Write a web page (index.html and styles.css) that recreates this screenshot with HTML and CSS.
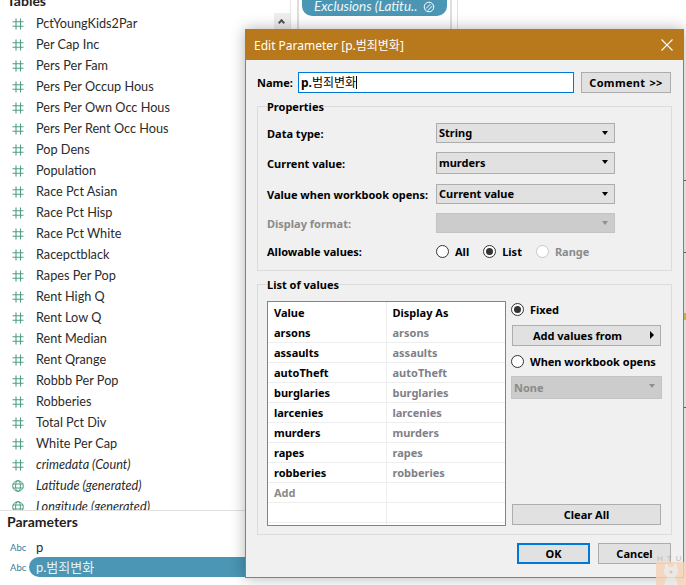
FILE: index.html
```html
<!DOCTYPE html>
<html lang="en">
<head>
  <meta charset="UTF-8" />
  <title>Edit Parameter</title>
  <link rel="stylesheet" href="styles.css">
</head>
<body>
  <svg class="defs" width="0" height="0">
    <symbol id="hash" viewBox="0 0 12 12">
      <path d="M4 .5v11M8.500 .5v11M.5 3.800h11M.5 8.200h11" fill="none" stroke="currentColor" stroke-width="1.100"/>
    </symbol>
    <symbol id="globe" viewBox="0 0 12 12">
      <circle cx="6" cy="6" r="5.300" fill="none" stroke="currentColor"/>
      <ellipse cx="6" cy="6" rx="2.400" ry="5.300" fill="none" stroke="currentColor"/>
      <path d="M.7 4h10.600M.7 8h10.600" fill="none" stroke="currentColor"/>
    </symbol>
  </svg>

  <div class="app">
    <!-- Data pane -->
    <aside class="sidebar">
      <div class="fields">
        <h3 class="pane-title tables-title">Tables</h3>
        <div class="field"><svg class="ico"><use href="#hash"/></svg>PctYoungKids2Par</div>
        <div class="field"><svg class="ico"><use href="#hash"/></svg>Per Cap Inc</div>
        <div class="field"><svg class="ico"><use href="#hash"/></svg>Pers Per Fam</div>
        <div class="field"><svg class="ico"><use href="#hash"/></svg>Pers Per Occup Hous</div>
        <div class="field"><svg class="ico"><use href="#hash"/></svg>Pers Per Own Occ Hous</div>
        <div class="field"><svg class="ico"><use href="#hash"/></svg>Pers Per Rent Occ Hous</div>
        <div class="field"><svg class="ico"><use href="#hash"/></svg>Pop Dens</div>
        <div class="field"><svg class="ico"><use href="#hash"/></svg>Population</div>
        <div class="field"><svg class="ico"><use href="#hash"/></svg>Race Pct Asian</div>
        <div class="field"><svg class="ico"><use href="#hash"/></svg>Race Pct Hisp</div>
        <div class="field"><svg class="ico"><use href="#hash"/></svg>Race Pct White</div>
        <div class="field"><svg class="ico"><use href="#hash"/></svg>Racepctblack</div>
        <div class="field"><svg class="ico"><use href="#hash"/></svg>Rapes Per Pop</div>
        <div class="field"><svg class="ico"><use href="#hash"/></svg>Rent High Q</div>
        <div class="field"><svg class="ico"><use href="#hash"/></svg>Rent Low Q</div>
        <div class="field"><svg class="ico"><use href="#hash"/></svg>Rent Median</div>
        <div class="field"><svg class="ico"><use href="#hash"/></svg>Rent Qrange</div>
        <div class="field"><svg class="ico"><use href="#hash"/></svg>Robbb Per Pop</div>
        <div class="field"><svg class="ico"><use href="#hash"/></svg>Robberies</div>
        <div class="field"><svg class="ico"><use href="#hash"/></svg>Total Pct Div</div>
        <div class="field"><svg class="ico"><use href="#hash"/></svg>White Per Cap</div>
        <div class="field calc"><svg class="ico"><use href="#hash"/></svg>crimedata (Count)</div>
        <div class="field calc"><svg class="ico"><use href="#globe"/></svg>Latitude (generated)</div>
        <div class="field calc"><svg class="ico"><use href="#globe"/></svg>Longitude (generated)</div>
      </div>
      <div class="params">
        <h3 class="pane-title">Parameters</h3>
        <div class="param"><span class="abc">Abc</span><span class="param-name">p</span></div>
        <div class="param"><span class="abc">Abc</span><span class="param-name selected">p.범죄변화</span></div>
      </div>
    </aside>

    <div class="scroll-col"><div class="scroll-up"><span class="chevron"></span></div></div>

    <!-- Shelf -->
    <div class="shelf">
      <div class="shelf-card">
        <div class="pill">
          Exclusions (Latitu..
          <svg class="link-ico" viewBox="0 0 12 12"><circle cx="6" cy="6" r="4.800" fill="none" stroke="#fff"/><path d="M3 7.500 7.500 3M4.800 9.500 9.500 4.800" fill="none" stroke="#fff"/></svg>
        </div>
      </div>
    </div>
    <div class="canvas"></div>
  </div>

  <i class="tick tick-1"></i>
  <i class="tick tick-2"></i>
  <i class="tick tick-3"></i>
  <i class="tick tick-4"></i>

  <!-- Dialog -->
  <div class="dialog">
    <div class="titlebar">
      <span>Edit Parameter [p.범죄변화]</span>
      <svg class="close" viewBox="0 0 12 12"><path d="M.5.500l11 11M11.500.500l-11 11" stroke="#fff" fill="none" stroke-width="1.100"/></svg>
    </div>
    <div class="dialog-body">
      <div class="name-row">
        <label class="name-label">Name:</label>
        <div class="name-input">p.<span class="kr">범죄변화</span><span class="caret"></span></div>
        <button class="btn comment-btn">Comment &gt;&gt;</button>
      </div>

      <fieldset class="group props">
        <legend>Properties</legend>
        <div class="prop-row">
          <span class="prop-label">Data type:</span>
          <div class="select">String<span class="arrow"></span></div>
        </div>
        <div class="prop-row tall-row">
          <span class="prop-label">Current value:</span>
          <div class="select tall">murders<span class="arrow"></span></div>
        </div>
        <div class="prop-row">
          <span class="prop-label">Value when workbook opens:</span>
          <div class="select">Current value<span class="arrow"></span></div>
        </div>
        <div class="prop-row">
          <span class="prop-label muted">Display format:</span>
          <div class="select disabled"><span class="arrow"></span></div>
        </div>
        <div class="prop-row allow-row">
          <span class="prop-label">Allowable values:</span>
          <div class="radios">
            <span class="radio-item"><span class="radio"></span>All</span>
            <span class="radio-item"><span class="radio on"></span>List</span>
            <span class="radio-item muted"><span class="radio off"></span>Range</span>
          </div>
        </div>
      </fieldset>

      <fieldset class="group list-group">
        <legend>List of values</legend>
        <div class="list-inner">
          <div class="values-box">
            <table class="values">
              <tr class="head"><th>Value</th><th>Display As</th></tr>
              <tr><td>arsons</td><td>arsons</td></tr>
              <tr><td>assaults</td><td>assaults</td></tr>
              <tr><td>autoTheft</td><td>autoTheft</td></tr>
              <tr><td>burglaries</td><td>burglaries</td></tr>
              <tr><td>larcenies</td><td>larcenies</td></tr>
              <tr><td>murders</td><td>murders</td></tr>
              <tr><td>rapes</td><td>rapes</td></tr>
              <tr><td>robberies</td><td>robberies</td></tr>
              <tr><td>Add</td><td></td></tr>
              <tr><td></td><td></td></tr>
              <tr><td></td><td></td></tr>
            </table>
          </div>
          <div class="list-side">
            <span class="radio-item"><span class="radio on"></span>Fixed</span>
            <button class="btn side-btn add-btn">Add values from<span class="arrow-right"></span></button>
            <span class="radio-item when"><span class="radio"></span>When workbook opens</span>
            <div class="select disabled none-select">None<span class="arrow"></span></div>
            <button class="btn side-btn clear-btn">Clear All</button>
          </div>
        </div>
      </fieldset>

      <div class="actions">
        <button class="btn ok-btn">OK</button>
        <button class="btn">Cancel</button>
      </div>
    </div>
  </div>

  <!-- corner watermark -->
  <div class="mark">
    <span class="mark-text">H T U</span>
    <svg class="mark-face" viewBox="0 0 30 23">
      <rect width="30" height="23" fill="#f5d3b8"/>
      <path d="M9 6c-1-4 2-6 3-3l1 2h4l1-2c1-3 4-1 3 3 2 3 1 7-2 8l3 9H8l3-9c-3-1-4-5-2-8z" fill="#ece8e2"/>
      <circle cx="15" cy="10" r="1.500" fill="#c9c2ba"/>
    </svg>
  </div>
</body>
</html>
```
FILE: styles.css
```css
html, body {
  margin: 0;
  padding: 0;
}
body {
  position: relative;
  width: 686px;
  height: 585px;
  overflow: hidden;
  background-color: white;
  font-family: Lato, sans-serif;
  color: #2b2b2b;
}
.defs {
  position: absolute;
}
.app {
  display: flex;
  height: 585px;
}

/* data pane */
.sidebar {
  width: 274px;
  flex: none;
  display: flex;
  flex-direction: column;
}
.fields {
  height: 510px;
  overflow: hidden;
  border-bottom: 1px solid #e2e2e2;
  box-sizing: content-box;
}
.pane-title {
  margin: 0;
  font-size: 14px;
  font-weight: 700;
  line-height: 20px;
  color: #1f1f1f;
  padding-left: 7px;
}
.tables-title {
  margin-top: -9px;
  margin-bottom: 2px;
}
.field {
  height: 21px;
  line-height: 21px;
  font-size: 12.700px;
  padding-left: 36px;
  position: relative;
  white-space: nowrap;
}
.calc {
  font-style: italic;
}
.ico {
  position: absolute;
  left: 12px;
  top: 5px;
  width: 12px;
  height: 12px;
  color: #4f9f80;
}
.params {
  padding-top: 1px;
}
.param {
  display: flex;
  align-items: center;
  height: 20px;
}
.params .pane-title {
  margin-bottom: 5px;
}
.abc {
  width: 29px;
  padding-left: 10px;
  box-sizing: border-box;
  flex: none;
  font-size: 9.500px;
  color: #3d7a96;
}
.param-name {
  font-size: 13px;
  padding-left: 7px;
  font-family: Lato, "Noto Sans CJK KR", sans-serif;
}
.param-name.selected {
  flex: 1;
  height: 20px;
  line-height: 20px;
  background-color: #4a96b4;
  color: #e8f2f6;
  border-radius: 10px 0 0 10px;
}

/* shelf column */
.scroll-col {
  width: 16px;
  flex: none;
  padding-top: 13px;
}
.scroll-up {
  height: 17px;
  background-color: #eeeeee;
  position: relative;
}
.chevron {
  position: absolute;
  left: 5px;
  top: 7px;
  width: 5px;
  height: 5px;
  border-left: 2px solid #555;
  border-top: 2px solid #555;
  transform: rotate(45deg);
  box-sizing: border-box;
}
.shelf {
  width: 168px;
  height: 100px;
  flex: none;
  box-sizing: border-box;
  padding-left: 6px;
  border-left: 1px solid #e6e6e6;
  border-right: 1px solid #e0e0e0;
}
.shelf-card {
  width: 155px;
  height: 100px;
  box-sizing: border-box;
  border-left: 2px solid #dedede;
  border-right: 2px solid #dedede;
  padding: 0 3px;
}
.pill {
  height: 16px;
  line-height: 11px;
  background-color: #4a96b4;
  color: #eef6f9;
  font-size: 13.500px;
  font-style: italic;
  border-radius: 0 0 10px 10px;
  padding-left: 12px;
  padding-bottom: 3px;
  box-sizing: border-box;
  white-space: nowrap;
  display: flex;
  align-items: center;
  gap: 6px;
}
.link-ico {
  width: 12px;
  height: 12px;
  flex: none;
}
.canvas {
  flex: 1;
}
.tick {
  position: absolute;
  left: 684px;
  width: 2px;
  height: 1px;
  background-color: #666;
}
.tick-1 { top: 180px; }
.tick-2 { top: 252px; }
.tick-3 { top: 313px; height: 7px; background-color: #e5c95a; }
.tick-4 { top: 407px; }

/* dialog */
.dialog {
  position: absolute;
  left: 245px;
  top: 29px;
  width: 439px;
  height: 549px;
  box-sizing: border-box;
  border: 1px solid #b8791c;
  background-color: #f0f0f0;
  box-shadow: 0 0 14px rgba(0,0,0,0.3);
  font-family: "Noto Sans", "Noto Sans CJK KR", sans-serif;
  font-size: 11px;
  font-weight: 700;
  color: black;
}
.titlebar {
  height: 30px;
  background-color: #b8791c;
  color: white;
  font-weight: 400;
  font-size: 12px;
  display: flex;
  align-items: center;
  justify-content: space-between;
  padding: 0 10px 0 8px;
}
.close {
  width: 12px;
  height: 12px;
}
.dialog-body {
  padding: 12px 11px 0 11px;
}
.name-row {
  display: flex;
  align-items: center;
  height: 21px;
}
.name-label {
  width: 41px;
  flex: none;
}
.name-input {
  width: 276px;
  height: 21px;
  box-sizing: border-box;
  border: 1px solid #0078d7;
  background-color: white;
  padding-left: 2px;
  line-height: 19px;
  font-size: 12px;
  display: flex;
  align-items: center;
}
.kr {
  font-weight: 400;
}
.caret {
  width: 1px;
  height: 13px;
  background-color: black;
}
.btn {
  font: inherit;
  color: black;
  height: 21px;
  width: 73px;
  padding: 0;
  border: 1px solid #adadad;
  background-color: #e1e1e1;
}
.comment-btn {
  width: 90px;
  margin-left: 7px;
  word-spacing: 1px;
  letter-spacing: 0.300px;
}
.group {
  margin: 0;
  padding: 0;
  border: 1px solid #dcdcdc;
  min-width: 0;
}
.group legend {
  padding: 0;
  margin-left: 0;
  line-height: 13px;
}
.props {
  margin-top: 7px;
  height: 171px;
  padding: 10px 9px 0;
  box-sizing: border-box;
}
.prop-row {
  display: flex;
  align-items: center;
  margin-bottom: 9px;
}
.tall-row {
  margin-bottom: 10px;
}
.prop-label {
  width: 169px;
  flex: none;
  white-space: nowrap;
}
.muted {
  color: #8a8a8a;
}
.select {
  position: relative;
  width: 179px;
  height: 20px;
  line-height: 18px;
  box-sizing: border-box;
  border: 1px solid #adadad;
  background-color: #e1e1e1;
  padding-left: 2px;
}
.select.tall {
  height: 22px;
  line-height: 20px;
}
.select.disabled {
  background-color: #cccccc;
  border-color: #c4c4c4;
  color: #8a8a8a;
}
.arrow {
  position: absolute;
  right: 6px;
  top: 7px;
  border-left: 3.500px solid transparent;
  border-right: 3.500px solid transparent;
  border-top: 4px solid black;
}
.select.disabled .arrow {
  border-top-color: #8f8f8f;
}
.allow-row {
  margin-top: 11px;
}
.radios {
  display: flex;
  gap: 14px;
}
.radio-item {
  display: inline-flex;
  align-items: center;
  gap: 6px;
}
.radio {
  width: 13px;
  height: 13px;
  box-sizing: border-box;
  border: 1px solid #333;
  border-radius: 50%;
  background-color: white;
  position: relative;
  flex: none;
}
.radio.on::after {
  content: "";
  position: absolute;
  left: 2px;
  top: 2px;
  width: 7px;
  height: 7px;
  border-radius: 50%;
  background-color: #333;
}
.radio.off {
  border-color: #c8c8c8;
}
.list-group {
  margin-top: 7px;
  height: 257px;
  box-sizing: border-box;
  padding: 10px 9px 0;
}
.list-inner {
  display: flex;
}
.values-box {
  width: 239px;
  height: 225px;
  box-sizing: border-box;
  border: 1px solid #82828c;
  background-color: white;
  overflow: hidden;
  flex: none;
}
.values {
  width: 237px;
  border-collapse: separate;
  border-spacing: 0;
  table-layout: fixed;
  font-size: 11px;
}
.values th, .values td {
  height: 20px;
  padding: 0 0 0 6px;
  box-sizing: border-box;
  text-align: left;
  border-bottom: 1px solid #eeeeee;
  font-weight: 700;
}
.values th:first-child, .values td:first-child {
  border-right: 1px solid #eeeeee;
}
.values th {
  height: 21px;
  border-bottom: none;
}
.values td:nth-child(2) {
  color: #808088;
}
.values tr:nth-child(10) td:first-child {
  color: #8a8a8a;
}
.list-side {
  margin-left: 5px;
  width: 151px;
  height: 224px;
  display: flex;
  flex-direction: column;
  align-items: flex-start;
}
.list-side .radio-item {
  margin-top: 2px;
  height: 13px;
}
.side-btn {
  width: 149px;
  margin-left: 1px;
  position: relative;
}
.add-btn {
  margin-top: 9px;
  padding-right: 18px;
}
.arrow-right {
  position: absolute;
  right: 6px;
  top: 5px;
  border-top: 4px solid transparent;
  border-bottom: 4px solid transparent;
  border-left: 4px solid black;
}
.list-side .when {
  margin-top: 9px;
}
.none-select {
  margin-top: 8px;
  width: 151px;
  height: 23px;
  line-height: 21px;
}
.clear-btn {
  margin-top: auto;
}
.actions {
  display: flex;
  justify-content: flex-end;
  gap: 8px;
  margin-top: 8px;
  margin-right: 1px;
}
.ok-btn {
  border: 2px solid #0078d7;
}

/* watermark */
.mark {
  position: absolute;
  left: 656px;
  top: 555px;
  width: 30px;
  height: 30px;
  opacity: 0.85;
}
.mark-text {
  position: absolute;
  left: 1px;
  top: -1px;
  font-family: "Liberation Sans", sans-serif;
  font-size: 8px;
  color: #b5b5b5;
  white-space: nowrap;
  letter-spacing: 1px;
}
.mark-face {
  position: absolute;
  left: 0;
  top: 7px;
  width: 30px;
  height: 23px;
}
```
